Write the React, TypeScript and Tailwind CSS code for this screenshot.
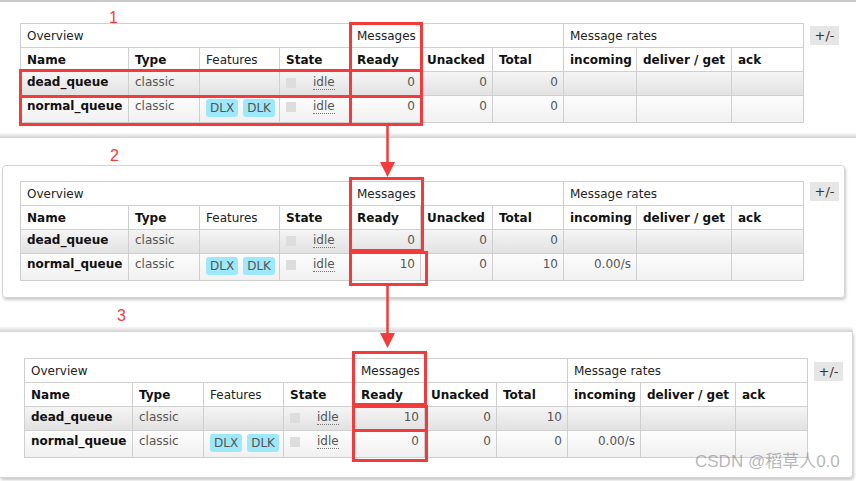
import React from "react";

type Row = {
  name: string;
  features: boolean;
  ready: string;
  unacked: string;
  total: string;
  incoming: string;
};

type Box = { left: number; top: number; width: number; height: number };

const RED = "border-[#f33b3b]";

function QueueTable({ rows, boxes }: { rows: Row[]; boxes: Box[] }) {
  const cell = "border border-[#cfcfcf] px-[6px]";
  return (
    <div className="relative">
      <table className="table-fixed border-collapse w-[783px] text-[12px] leading-[14px]">
        <colgroup>
          <col className="w-[108px]" />
          <col className="w-[71px]" />
          <col className="w-[80px]" />
          <col className="w-[71px]" />
          <col className="w-[70px]" />
          <col className="w-[72px]" />
          <col className="w-[71px]" />
          <col className="w-[73px]" />
          <col className="w-[95px]" />
          <col className="w-[72px]" />
        </colgroup>
        <thead>
          <tr className="h-[24px] bg-white">
            <th colSpan={4} className={`${cell} text-left font-normal text-[#222]`}>
              Overview
            </th>
            <th colSpan={3} className={`${cell} text-left font-normal text-[#222]`}>
              Messages
            </th>
            <th colSpan={3} className={`${cell} text-left font-normal text-[#222]`}>
              Message rates
            </th>
          </tr>
          <tr className="h-[24px] bg-white text-[#111]">
            <th className={`${cell} text-left font-bold`}>Name</th>
            <th className={`${cell} text-left font-bold`}>Type</th>
            <th className={`${cell} text-left font-normal text-[#222]`}>Features</th>
            <th className={`${cell} text-left font-bold`}>State</th>
            <th className={`${cell} text-left font-bold`}>Ready</th>
            <th className={`${cell} text-left font-bold`}>Unacked</th>
            <th className={`${cell} text-left font-bold`}>Total</th>
            <th className={`${cell} text-left font-bold`}>incoming</th>
            <th className={`${cell} text-left font-bold whitespace-nowrap`}>deliver / get</th>
            <th className={`${cell} text-left font-bold`}>ack</th>
          </tr>
        </thead>
        <tbody>
          {rows.map((r, i) => (
            <tr
              key={r.name}
              className={
                i === 0
                  ? "h-[24px] bg-gradient-to-b from-[#f5f5f5] to-[#e1e1e1]"
                  : "h-[27px] bg-gradient-to-b from-[#fdfdfd] to-[#f0f0f0]"
              }
            >
              <td className={`${cell} align-top pt-[3px] font-bold text-[#111] whitespace-nowrap`}>
                {r.name}
              </td>
              <td className={`${cell} align-top pt-[3px] text-[#555]`}>classic</td>
              <td className={`${cell} align-top pt-[3px]`}>
                {r.features && (
                  <div className="flex gap-[5px]">
                    <span className="rounded-[3px] bg-[#9de8fb] px-[4px] py-[2px] text-[#555]">DLX</span>
                    <span className="rounded-[3px] bg-[#9de8fb] px-[4px] py-[2px] text-[#555]">DLK</span>
                  </div>
                )}
              </td>
              <td className={`${cell} align-top pt-[3px]`}>
                <div className="flex items-start">
                  <span className="mt-[3px] block h-[10px] w-[10px] bg-[#dddddd]" />
                  <span className="ml-[17px] border-b border-dotted border-[#777] leading-[14px] text-[#555]">
                    idle
                  </span>
                </div>
              </td>
              <td className={`${cell} align-top pt-[3px] text-right pr-[5px] text-[#555]`}>{r.ready}</td>
              <td className={`${cell} align-top pt-[3px] text-right pr-[5px] text-[#555]`}>{r.unacked}</td>
              <td className={`${cell} align-top pt-[3px] text-right pr-[5px] text-[#555]`}>{r.total}</td>
              <td className={`${cell} align-top pt-[3px] text-right pr-[5px] text-[#555]`}>{r.incoming}</td>
              <td className={`${cell} align-top pt-[3px]`} />
              <td className={`${cell} align-top pt-[3px]`} />
            </tr>
          ))}
        </tbody>
      </table>
      {boxes.map((b, i) => (
        <div
          key={i}
          className={`absolute border-[3px] ${RED}`}
          style={{ left: b.left, top: b.top, width: b.width, height: b.height }}
        />
      ))}
    </div>
  );
}

function PlusMinus({ mt }: { mt: string }) {
  return (
    <div
      className={`ml-[6px] ${mt} flex h-[19px] w-[29px] items-center justify-center bg-[#e6e6e6] text-[13px] text-[#333]`}
    >
      +/-
    </div>
  );
}

const p1: Row[] = [
  { name: "dead_queue", features: false, ready: "0", unacked: "0", total: "0", incoming: "" },
  { name: "normal_queue", features: true, ready: "0", unacked: "0", total: "0", incoming: "" },
];
const p2: Row[] = [
  { name: "dead_queue", features: false, ready: "0", unacked: "0", total: "0", incoming: "" },
  { name: "normal_queue", features: true, ready: "10", unacked: "0", total: "10", incoming: "0.00/s" },
];
const p3: Row[] = [
  { name: "dead_queue", features: false, ready: "10", unacked: "0", total: "10", incoming: "" },
  { name: "normal_queue", features: true, ready: "0", unacked: "0", total: "0", incoming: "0.00/s" },
];

function Label({ text, pl, pt }: { text: string; pl: string; pt: string }) {
  return (
    <div className={`${pl} ${pt} font-['Liberation_Sans',sans-serif] text-[16px] leading-none text-[#f33b3b]`}>
      {text}
    </div>
  );
}

function Arrow({ top, height }: { top: number; height: number }) {
  return (
    <svg
      className="absolute"
      style={{ left: 378, top, width: 20, height }}
      viewBox={`0 0 20 ${height}`}
    >
      <line x1={9.5} y1={0} x2={9.5} y2={height - 14} stroke="#f33b3b" strokeWidth={2.5} />
      <polygon points={`2,${height - 15} 17,${height - 15} 9.5,${height}`} fill="#f33b3b" />
    </svg>
  );
}

export default function App() {
  return (
    <div className="relative h-[481px] w-[856px] overflow-hidden bg-white font-['DejaVu_Sans',sans-serif]">
      <div className="flex flex-col">
        {/* Panel 1 */}
        <div className="relative h-[133px] border-t-2 border-[#c9c9c9]">
          <div className="absolute left-[109px] top-[8px] font-['Liberation_Sans',sans-serif] text-[16px] leading-none text-[#f33b3b]">
            1
          </div>
          <div className="flex pl-[20px] pt-[21px]">
            <QueueTable
              rows={p1}
              boxes={[
                { left: 329, top: -1, width: 74, height: 104 },
                { left: -1, top: 46, width: 404, height: 29 },
                { left: -1, top: 72, width: 333, height: 31 },
              ]}
            />
            <PlusMinus mt="mt-[3px]" />
          </div>
        </div>
        <div className="h-[5px] bg-gradient-to-b from-[#f7f7f7] to-[#d2d2d2]" />

        {/* Gap with label 2 */}
        <div className="h-[27px]">
          <Label text="2" pl="pl-[110px]" pt="pt-[10px]" />
        </div>

        {/* Panel 2 */}
        <div className="ml-[2px] h-[133px] w-[843px] rounded-[4px] border border-[#d4d4d4] shadow-[1px_2px_3px_rgba(0,0,0,0.22)]">
          <div className="flex pl-[17px] pt-[15px]">
            <QueueTable
              rows={p2}
              boxes={[
                { left: 329, top: -4, width: 75, height: 75 },
                { left: 329, top: 70, width: 79, height: 35 },
              ]}
            />
            <PlusMinus mt="mt-[1px]" />
          </div>
        </div>

        {/* Gap with label 3 */}
        <div className="h-[29px]">
          <Label text="3" pl="pl-[117px]" pt="pt-[10px]" />
        </div>
        <div className="h-[5px] w-[853px] rounded-tr-[4px] bg-gradient-to-b from-[#f7f7f7] to-[#d2d2d2]" />

        {/* Panel 3 */}
        <div className="h-[146px] w-[853px] rounded-br-[4px] border-r border-b border-[#d4d4d4] shadow-[1px_2px_3px_rgba(0,0,0,0.22)]">
          <div className="flex pl-[24px] pt-[26px]">
            <QueueTable
              rows={p3}
              boxes={[
                { left: 328, top: -7, width: 75, height: 55 },
                { left: 328, top: 47, width: 76, height: 27 },
                { left: 328, top: 71, width: 76, height: 33 },
              ]}
            />
            <PlusMinus mt="mt-[4px]" />
          </div>
        </div>
      </div>

      <Arrow top={126} height={51} />
      <Arrow top={286} height={62} />

      <div className="absolute left-[695px] top-[452px] font-['Liberation_Sans','Noto_Sans_CJK_SC',sans-serif] text-[17px] leading-[20px] text-[rgba(120,120,120,0.55)]">
        CSDN @稻草人0.0
      </div>
    </div>
  );
}
